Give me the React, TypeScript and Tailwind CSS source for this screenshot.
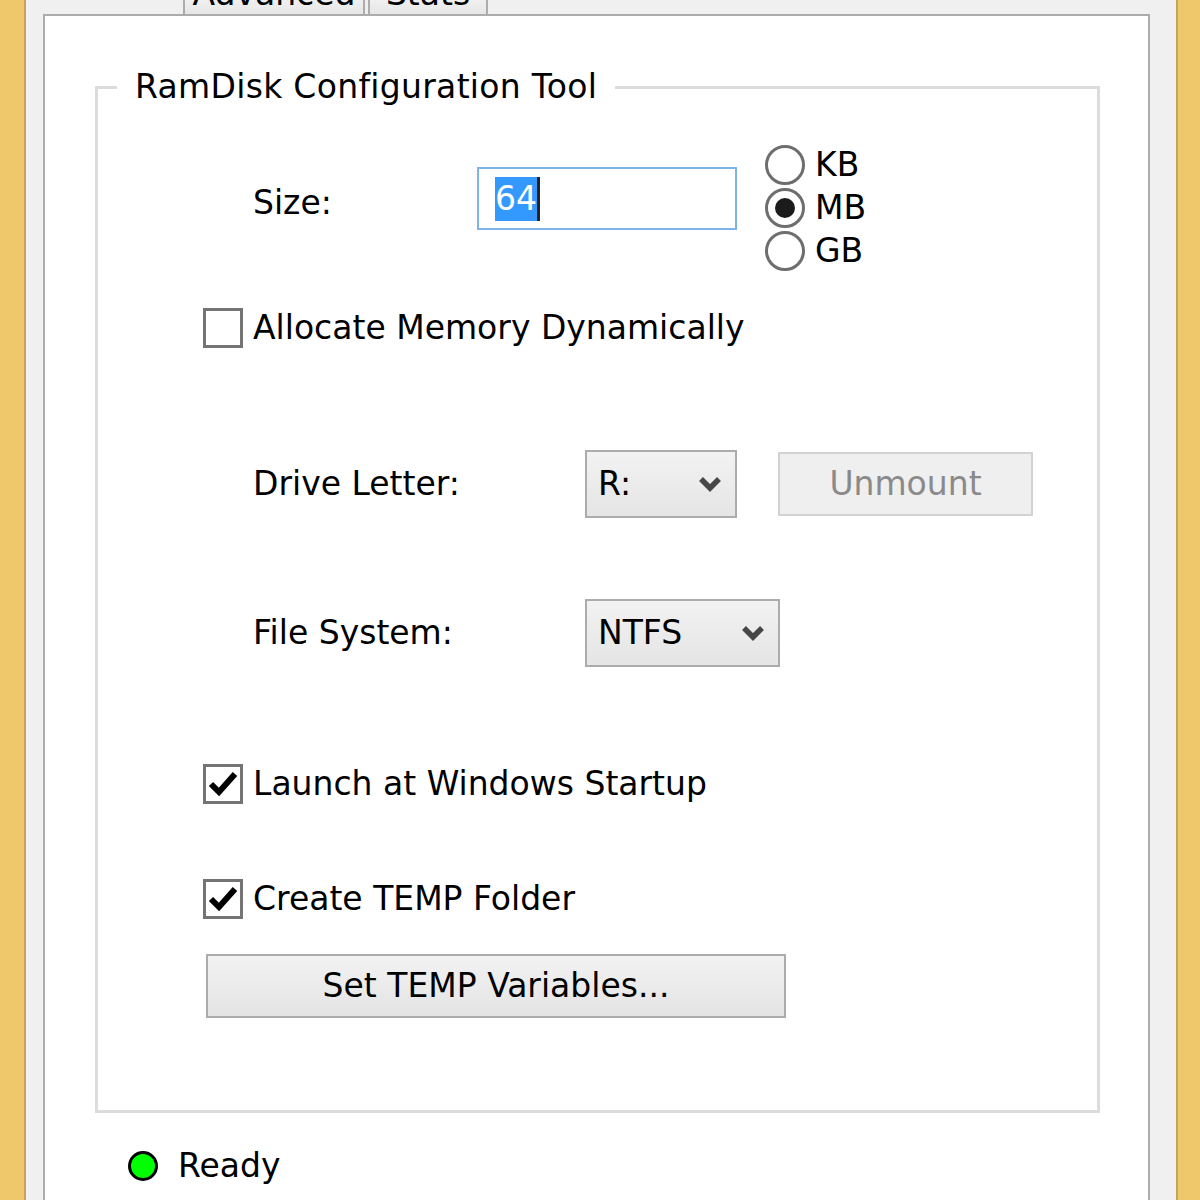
import React from "react";

const Check = () => (
  <svg width="32" height="30" viewBox="0 0 32 30">
    <path d="M4 15 L12 23 L28 5" fill="none" stroke="#000" strokeWidth="6" strokeLinejoin="miter" />
  </svg>
);

const Chevron = () => (
  <svg width="24" height="16" viewBox="0 0 24 16">
    <path d="M3 3 L12 12 L21 3" fill="none" stroke="#474747" strokeWidth="5.5" />
  </svg>
);

const CheckBox = ({ checked, label }: { checked?: boolean; label: string }) => (
  <div className="flex items-center gap-[10px]">
    <div className="w-[40px] h-[40px] border-[3px] border-[#747474] bg-white flex items-center justify-center">
      {checked && <Check />}
    </div>
    <span className="leading-[40px]">{label}</span>
  </div>
);

const Radio = ({ selected, label }: { selected?: boolean; label: string }) => (
  <div className="h-[43px] flex items-center gap-[10px]">
    <div className="w-[40px] h-[40px] rounded-full border-[3px] border-[#6e6e6e] bg-white flex items-center justify-center">
      {selected && <div className="w-[20px] h-[20px] rounded-full bg-[#1b1b1b]" />}
    </div>
    <span className="leading-[40px]">{label}</span>
  </div>
);

const Select = ({ value, width }: { value: string; width: string }) => (
  <div
    className={`${width} h-[68px] border-2 border-[#acacac] bg-gradient-to-b from-[#f2f2f2] to-[#e5e5e5] flex items-center justify-between pl-[11px] pr-[13px]`}
  >
    <span className="leading-[40px]">{value}</span>
    <Chevron />
  </div>
);

export default function App() {
  return (
    <div
      className="w-[1200px] h-[1200px] overflow-hidden flex bg-[#f0f0f0] text-black text-[33px]"
      style={{ fontFamily: '"DejaVu Sans", "Liberation Sans", sans-serif' }}
    >
      <div className="w-[26px] bg-[#eec86a] border-r-2 border-[#c4a35c]" />

      <div className="flex-1 flex flex-col pl-[17px] pr-[26px]">
        {/* tabs, mostly scrolled off the top */}
        <div className="h-[14px] flex gap-[3px] ml-[140px]">
          <div className="w-[182px] h-[14px] overflow-hidden flex items-end justify-center border-x-2 border-[#acacac] bg-gradient-to-b from-[#f0f0f0] to-[#e6e6e6]">
            <span className="leading-[40px] whitespace-nowrap">Advanced</span>
          </div>
          <div className="w-[120px] h-[14px] overflow-hidden flex items-end justify-center border-x-2 border-[#acacac] bg-gradient-to-b from-[#f0f0f0] to-[#e6e6e6]">
            <span className="leading-[40px] whitespace-nowrap">Stats</span>
          </div>
        </div>

        <div className="flex-1 bg-white border-2 border-b-0 border-[#acacac] flex flex-col">
          <div className="pl-[50px] pr-[48px] mt-[51px]">
            <fieldset className="border-[3px] border-[#dcdcdc] pb-[92px]">
              <legend className="ml-[19px] px-[18px] leading-[40px] tracking-[0.3px]">RamDisk Configuration Tool</legend>

              <div className="pl-[105px] flex flex-col">
                {/* size */}
                <div className="flex items-start mt-[36px]">
                  <span className="ml-[50px] w-[224px] mt-[40px] leading-[40px]">Size:</span>
                  <div className="w-[260px] h-[63px] mt-[24px] border-2 border-[#7eb4ea] flex items-center pl-[16px]">
                    <span className="bg-[#3399ff] text-white leading-[44px]">64</span>
                    <span className="w-[3px] h-[44px] bg-[#222]" />
                  </div>
                  <div className="ml-[28px] flex flex-col">
                    <Radio label="KB" />
                    <Radio label="MB" selected />
                    <Radio label="GB" />
                  </div>
                </div>

                <div className="mt-[36px]">
                  <CheckBox label="Allocate Memory Dynamically" />
                </div>

                {/* drive letter */}
                <div className="flex items-center mt-[102px]">
                  <span className="ml-[50px] w-[332px] leading-[40px]">Drive Letter:</span>
                  <Select value="R:" width="w-[152px]" />
                  <div className="ml-[41px] w-[255px] h-[64px] border-2 border-[#d2d2d2] bg-[#efefef] flex items-center justify-center text-[#8a8a8a]">
                    Unmount
                  </div>
                </div>

                {/* file system */}
                <div className="flex items-center mt-[81px]">
                  <span className="ml-[50px] w-[332px] leading-[40px]">File System:</span>
                  <Select value="NTFS" width="w-[195px]" />
                </div>

                <div className="mt-[97px]">
                  <CheckBox checked label="Launch at Windows Startup" />
                </div>
                <div className="mt-[75px]">
                  <CheckBox checked label="Create TEMP Folder" />
                </div>

                <div className="mt-[35px] ml-[3px] w-[580px] h-[64px] border-2 border-[#acacac] bg-gradient-to-b from-[#f2f2f2] to-[#e4e4e4] flex items-center justify-center">
                  Set TEMP Variables...
                </div>
              </div>
            </fieldset>
          </div>

          {/* status */}
          <div className="mt-[33px] pl-[83px] h-[40px] flex items-center gap-[20px]">
            <div className="w-[30px] h-[30px] rounded-full bg-[#00ff00] border-[3px] border-black" />
            <span className="leading-[40px]">Ready</span>
          </div>
        </div>
      </div>

      <div className="w-[24px] bg-[#eec86a] border-l-2 border-[#c4a35c]" />
    </div>
  );
}
